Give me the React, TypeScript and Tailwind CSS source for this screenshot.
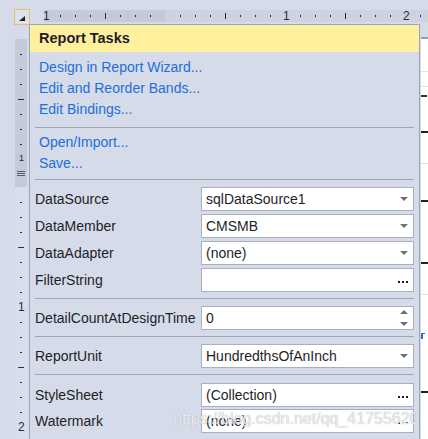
import React from 'react';

const hTicks = Array.from({ length: 26 }, (_, i) => 45 + i * 15);
const vBand1 = [54, 69, 84, 99, 114, 129, 144];
const vBand2 = Array.from({ length: 16 }, (_, i) => 202 + i * 15);

const DropArrow = () => (
    <svg width="8" height="4" viewBox="0 0 8 4">
        <path d="M0 0h8L4 4z" fill="#707070" />
    </svg>
);

const Dots = () => (
    <div className="flex gap-[2px] pt-[4px]">
        <div className="h-[2px] w-[2px] bg-[#1e1e1e]"></div>
        <div className="h-[2px] w-[2px] bg-[#1e1e1e]"></div>
        <div className="h-[2px] w-[2px] bg-[#1e1e1e]"></div>
    </div>
);

const Spin = () => (
    <div className="flex flex-col gap-[8px]">
        <svg width="8" height="4" viewBox="0 0 8 4">
            <path d="M0 4h8L4 0z" fill="#707070" />
        </svg>
        <svg width="8" height="4" viewBox="0 0 8 4">
            <path d="M0 0h8L4 4z" fill="#707070" />
        </svg>
    </div>
);

interface RowProps {
    label: string;
    value: string;
    kind: 'drop' | 'dots' | 'spin';
}

const Row: React.FC<RowProps> = ({ label, value, kind }) => (
    <div className="flex h-[24px] items-center">
        <div className="w-[166px] text-[#1e1e28]">{label}</div>
        <div className="flex h-[24px] w-[213px] items-center justify-between border border-[#a8afbe] bg-white pl-[4px] pr-[5px]">
            <span className="text-[#1e1e28]">{value}</span>
            {kind === 'drop' && <DropArrow />}
            {kind === 'dots' && <Dots />}
            {kind === 'spin' && <Spin />}
        </div>
    </div>
);

const Sep = ({ mt }: { mt: string }) => <div className={`mx-[5px] h-px bg-[#a0a7b7] ${mt}`}></div>;

export default function App() {
    return (
        <div
            className="relative h-[439px] w-[428px] overflow-hidden bg-[#d6dbe9] text-[14px]"
            style={{ fontFamily: '"Liberation Sans", Arial, sans-serif' }}
        >
            {/* smart tag */}
            <div className="absolute left-[14px] top-[9px] h-[16px] w-[16px] border border-[#e6c266] bg-[#dde1ec]">
                <svg width="14" height="14" viewBox="0 0 14 14" className="absolute left-0 top-0">
                    <path d="M4 11h6V6z" fill="#1e1e1e" />
                </svg>
            </div>

            {/* horizontal ruler */}
            <div className="absolute left-[44px] right-0 top-[10px] flex h-[12px]">
                <div className="w-[121px] bg-[#c4cad7]"></div>
                <div className="flex-1 bg-[#cdd2de]"></div>
            </div>
            {hTicks.map((x) => {
                const n = (x - 165) / 15;
                if (n === 0) return null;
                if (n % 8 === 0)
                    return (
                        <div
                            key={x}
                            className="absolute top-[9px] text-[12px] leading-[14px] text-[#2a2a3e]"
                            style={{ left: x - 2 }}
                        >
                            {Math.abs(n / 8)}
                        </div>
                    );
                if (n % 4 === 0)
                    return <div key={x} className="absolute top-[13px] h-[6px] w-px bg-[#2a2a3e]" style={{ left: x }}></div>;
                return <div key={x} className="absolute top-[15px] h-[2px] w-px bg-[#2a2a3e]" style={{ left: x }}></div>;
            })}

            {/* vertical ruler */}
            <div className="absolute bottom-0 left-[15px] top-[39px] flex w-[12px] flex-col">
                <div className="h-[148px] bg-[#c4cad7]"></div>
                <div className="flex-1 bg-[#dadeea]"></div>
            </div>
            {vBand1.map((y, i) => (
                <div
                    key={y}
                    className={i === 3 ? 'absolute left-[18px] h-px w-[6px] bg-[#2a2a3e]' : 'absolute left-[20px] h-px w-[2px] bg-[#2a2a3e]'}
                    style={{ top: y }}
                ></div>
            ))}
            <div className="absolute left-[19px] top-[153px] text-[9px] leading-[10px] text-[#2a2a3e]">1</div>
            <div className="absolute left-[17px] top-[171px] flex w-[8px] flex-col gap-[1px]">
                <div className="h-px bg-[#555a68]"></div>
                <div className="h-px bg-[#555a68]"></div>
                <div className="h-px bg-[#555a68]"></div>
            </div>
            {vBand2.map((y, i) => {
                const n = i + 1;
                if (n % 8 === 0)
                    return (
                        <div key={y} className="absolute left-[18px] text-[12px] leading-[12px] text-[#2a2a3e]" style={{ top: y - 6 }}>
                            {n / 8}
                        </div>
                    );
                return (
                    <div
                        key={y}
                        className={n % 4 === 0 ? 'absolute left-[18px] h-px w-[6px] bg-[#2a2a3e]' : 'absolute left-[20px] h-px w-[2px] bg-[#2a2a3e]'}
                        style={{ top: y }}
                    ></div>
                );
            })}

            {/* design surface peeking out on the right */}
            <div className="absolute bottom-0 left-[421px] right-0 top-[37px] border-t-2 border-[#8e9fbe] bg-white">
                <div className="mt-[32px] h-px bg-[#e3e3e3]"></div>
                <div className="mt-[14px] h-px bg-[#e3e3e3]"></div>
                <div className="mt-[8px] h-[14px] w-[6px] border-t-2 border-[#333]"></div>
                <div className="mt-[22px] h-[2px] bg-[#222]"></div>
                <div className="mt-[30px] h-px bg-[#e3e3e3]"></div>
                <div className="mt-[36px] h-[2px] bg-[#222]"></div>
                <div className="mt-[60px] h-[2px] bg-[#222]"></div>
                <div className="mt-[30px] h-px bg-[#e3e3e3]"></div>
                <div className="mt-[38px] h-[6px] w-[4px] border-l-2 border-t border-[#2a6fd0]"></div>
                <div className="mt-[52px] h-[2px] bg-[#222]"></div>
            </div>

            {/* Report Tasks popup */}
            <div className="absolute left-[29px] top-[24px] h-[430px] w-[391px] border border-[#9ca4b6] bg-[#d6dbe9]">
                <div className="flex h-[27px] items-center bg-[#fff09e] pl-[9px] text-[14.5px] font-bold text-[#1e1e28]">Report Tasks</div>

                <div className="flex flex-col pl-[9px] pt-[5px] leading-[21px] text-[#1c6fd8]">
                    <span>Design in Report Wizard...</span>
                    <span>Edit and Reorder Bands...</span>
                    <span>Edit Bindings...</span>
                </div>
                <Sep mt="mt-[7px]" />
                <div className="flex flex-col pl-[9px] pt-[4px] leading-[21px] text-[#1c6fd8]">
                    <span>Open/Import...</span>
                    <span>Save...</span>
                </div>
                <Sep mt="mt-[5px]" />

                <div className="flex flex-col gap-[3px] pl-[5px] pt-[7px]">
                    <Row label="DataSource" value="sqlDataSource1" kind="drop" />
                    <Row label="DataMember" value="CMSMB" kind="drop" />
                    <Row label="DataAdapter" value="(none)" kind="drop" />
                    <Row label="FilterString" value="" kind="dots" />
                </div>
                <Sep mt="mt-[6px]" />
                <div className="pl-[5px] pt-[7px]">
                    <Row label="DetailCountAtDesignTime" value="0" kind="spin" />
                </div>
                <Sep mt="mt-[6px]" />
                <div className="pl-[5px] pt-[7px]">
                    <Row label="ReportUnit" value="HundredthsOfAnInch" kind="drop" />
                </div>
                <Sep mt="mt-[6px]" />
                <div className="flex flex-col gap-[2px] pl-[5px] pt-[8px]">
                    <Row label="StyleSheet" value="(Collection)" kind="dots" />
                    <Row label="Watermark" value="(none)" kind="dots" />
                </div>
            </div>

            {/* blog watermark */}
            <div className="pointer-events-none absolute left-[173px] top-[409px] text-[16px] leading-[20px] text-white/75 [text-shadow:0_0_1px_#9aa0ac]">
                https://blog.csdn.net/qq_41755620
            </div>
        </div>
    );
}
